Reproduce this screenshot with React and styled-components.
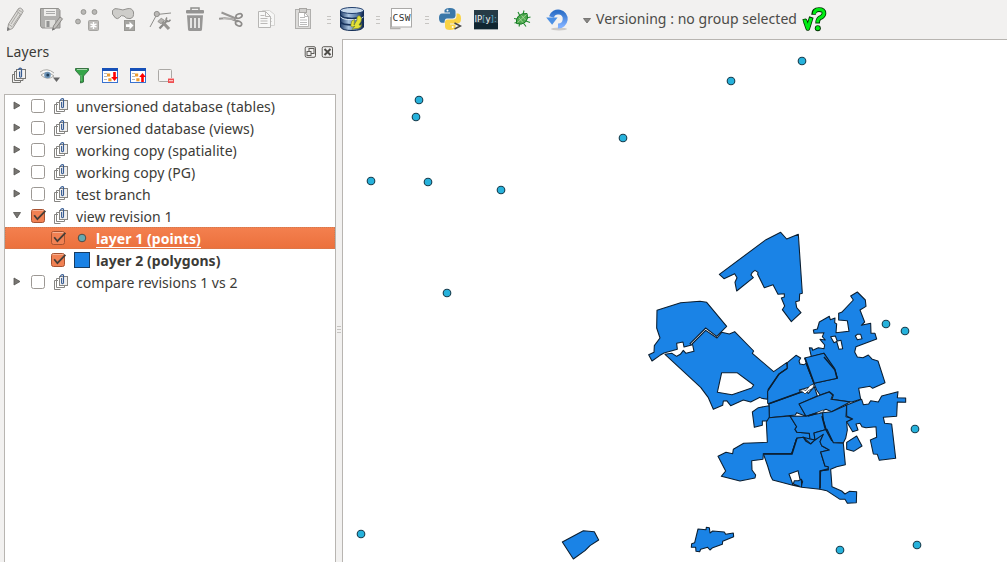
import React from 'react';
import styled, { createGlobalStyle, css } from 'styled-components';

const GlobalStyle = createGlobalStyle`
  * { box-sizing: border-box; }
  html, body { margin: 0; padding: 0; overflow: hidden; }
  body { background: #f2f1f0; font-family: "Noto Sans", "Open Sans", sans-serif; color: #3c3b37; }
  svg { display: block; flex: none; }
`;

const Window = styled.div`
  width: 1007px;
  height: 562px;
  display: flex;
  flex-direction: column;
  background: #f2f1f0;
`;
const Toolbar = styled.header`
  height: 39px;
  flex: none;
  display: flex;
  align-items: center;
`;
const ToolIcon = styled.svg`
  margin-left: ${(p) => p.$gap}px;
`;
const VersionLabel = styled.span`
  margin-left: 5px;
  width: 202px;
  padding-bottom: 1px;
  font-size: 14px;
  letter-spacing: 0.04px;
  line-height: 20px;
  white-space: nowrap;
  color: #4c4b48;
`;
const Body = styled.main`
  flex: 1;
  min-height: 0;
  display: flex;
`;
const Dock = styled.aside`
  width: 336px;
  flex: none;
  padding-left: 4px;
  display: flex;
  flex-direction: column;
`;
const DockTitle = styled.div`
  height: 25px;
  padding: 0 3px 0 2px;
  display: flex;
  align-items: center;
  font-size: 14px;
  letter-spacing: 0.1px;
`;
const DockButtons = styled.div`
  display: flex;
  gap: 5px;
  margin-left: auto;
`;
const DockTools = styled.div`
  height: 30px;
  flex: none;
  display: flex;
`;
const Tree = styled.div`
  flex: 1;
  border: 1px solid #b8b5b1;
  border-bottom: 0;
  background: #fff;
`;
const Row = styled.div`
  height: 22px;
  padding-left: ${(p) => (p.$child ? 45 : 8)}px;
  display: flex;
  align-items: center;
  font-size: 14px;
  line-height: 22px;
  white-space: nowrap;
  font-weight: ${(p) => (p.$child ? 700 : 400)};
  ${(p) => p.$selected && css`
    color: #fff;
    background: linear-gradient(#f4804f, #eb703c);
    outline: 1px dotted #cf7a51;
    outline-offset: -1px;
  `}
`;
const Name = styled.span`
  margin-top: 2px;
  margin-left: ${(p) => (p.$child ? 6 : 7)}px;
  letter-spacing: ${(p) => (p.$child ? 0.06 : 0.04)}px;
  line-height: 16px;
  border-bottom: 1px solid ${(p) => (p.$line ? '#fff' : 'transparent')};
`;
const Expander = styled.svg`
  margin-right: 9px;
`;
const Symbol = styled.svg`
  margin-left: 7px;
`;
const GroupHolder = styled.span`
  margin-left: 7px;
`;
const Splitter = styled.div`
  width: 6px;
  flex: none;
  display: flex;
  flex-direction: column;
  align-items: center;
  gap: 2px;
  padding-top: 287px;
`;
const Notch = styled.i`
  width: 4px;
  height: 1px;
  background: #c5c3c0;
`;
const MapCanvas = styled.section`
  flex: 1;
  border-left: 1px solid #b8b5b1;
  border-top: 1px solid #b8b5b1;
  background: #fff;
`;

/* Every toolbar drawing uses window coordinates, from x across w pixels. */
function Tool({ x, w, gap, children }) {
  return <ToolIcon $gap={gap} width={w} height="39" viewBox={`${x} 0 ${w} 39`}>{children}</ToolIcon>;
}
function Grip({ x, gap }) {
  return <Tool x={x} w={4} gap={gap}><path d={`M${x} 16.5h4M${x} 19.5h4M${x} 23.5h4`} stroke="#c7c5c2" /></Tool>;
}

function MainToolbar() {
  return (
    <Toolbar>
      <Tool x={6} w={18} gap={6}>
        <path d="M7.5 30.5L8.5 24 18.5 8.5Q20 7 22.5 9.5Q24 11 22 13.5L12.5 28.5Z" fill="#dddcd9" stroke="#9b9996" />
        <path d="M9 24.5l3.5 2.5M18 9.5l4.5 3M17 11.5l4 3M11 24L19 11.5M13 25.5L20.5 14" stroke="#aaa8a4" fill="none" />
        <path d="M7 31l.5-4 2.5 2z" fill="#777" />
      </Tool>
      <Tool x={40} w={24} gap={16}>
        <path d="M40.5 8.5h18l1.5 2v17.5H42l-1.5-2z" fill="#b1b0ae" stroke="#93928f" />
        <rect x="44" y="9" width="12" height="7" fill="#eeedeb" /><path d="M46 11.5h9M46 13.5h9" stroke="#aaa" />
        <rect x="45" y="20" width="10" height="7.5" fill="#dfdedb" /><rect x="46.5" y="21" width="3" height="6" fill="#929292" />
        <path d="M52.5 30l1-4 6.5-9 2.5 1.8-6.5 9z" fill="#c3c1be" stroke="#8b8985" /><path d="M52 30.5l3-1-2-1.8z" fill="#777" />
      </Tool>
      <Tool x={74} w={26} gap={10}>
        {[[83.5, 12], [94.5, 12], [78, 21.5]].map(([x, y]) => <circle key={x} cx={x} cy={y} r="2.4" fill="#b9b8b5" stroke="#979692" />)}
        <rect x="88.5" y="20.5" width="10" height="10" rx="1" fill="#bdbbb8" stroke="#a5a4a1" />
        <path d="M93.5 22v7M90.5 23.8l6 3.4M96.5 23.8l-6 3.4" stroke="#fff" strokeWidth="1.5" />
      </Tool>
      <Tool x={111} w={25} gap={11}>
        <path d="M115.5 18Q111 14 112.5 10.5Q114.5 7.5 118.5 9Q123 11 127 8.8Q132 7.5 133.5 12Q134.2 18 130 18.6Q126 19 124 16Q121 14.5 119.5 17.5Q117.5 19.5 115.5 18Z" fill="#cecdca" stroke="#92918e" />
        <rect x="124.5" y="20.5" width="10" height="10" fill="#a6a5a2" stroke="#989793" />
        <path d="M126 24.2h3.5v-2.4l4 3.8-4 3.8v-2.4H126z" fill="#fff" />
      </Tool>
      <Tool x={149} w={22} gap={13}>
        <path d="M150 27L156.8 14.5L171 13" fill="none" stroke="#8e8d8a" /><circle cx="156.8" cy="14" r="2.6" fill="#bbb9b6" stroke="#8e8d8a" />
        <path d="M159.5 28.5l8-8.5" stroke="#8b8a87" strokeWidth="2.2" /><path d="M162 21.5l7 7.5" stroke="#969491" strokeWidth="3.2" />
        <path d="M157.8 21.5l3.4-3.2 3.4 2.2-3.6 3.2z" fill="#b5b3b0" stroke="#8b8a87" strokeWidth=".8" />
        <path d="M167 17.5q-2 2.5 0 3.8q2.2.8 3.5-1.6" fill="none" stroke="#8b8a87" strokeWidth="1.5" />
      </Tool>
      <Tool x={186} w={18} gap={15}>
        <path d="M191 10V8h8v2" fill="none" stroke="#8f8e8c" strokeWidth="1.5" />
        <rect x="186" y="10" width="18" height="3.6" rx="1" fill="#949392" />
        <path d="M187 15.2h16l-1 14.3q0 1.5-2 1.5h-10q-2 0-2-1.5z" fill="#989796" />
        <path d="M191 18v10M195 18v10M199 18v10" stroke="#f2f1f0" strokeWidth="1.7" />
      </Tool>
      <Tool x={219} w={24} gap={15}>
        <path d="M219 18.8Q229 17 238 21.5M221.5 12.5Q230 16 236 18.5" fill="none" stroke="#989694" strokeWidth="2" />
        <ellipse cx="239" cy="16" rx="3.2" ry="2.1" transform="rotate(-20 239 16)" fill="none" stroke="#8e8c8a" strokeWidth="1.7" />
        <ellipse cx="238.6" cy="23.5" rx="3.2" ry="2.3" transform="rotate(28 238.6 23.5)" fill="none" stroke="#8e8c8a" strokeWidth="1.7" />
        <path d="M223 18.6L234 19.2" stroke="#d1cfcd" strokeWidth=".8" />
      </Tool>
      <Tool x={258} w={18} gap={15}>
        <path d="M262.5 10.5h7l5 4v11h-12z" fill="#f7f7f6" stroke="#d5d4d2" /><path d="M265 18.5h7M265 21.5h7" stroke="#d8d7d5" />
        <path d="M258.5 11.5h7l5 5v11h-12z" fill="#f8f8f7" stroke="#b7b6b4" /><path d="M265.5 11.5v5h5M260.5 15.5h4M260.5 18.5h7M260.5 21h7M260.5 23.5h7" fill="none" stroke="#bbb9b7" />
      </Tool>
      <Tool x={294} w={18} gap={18}>
        <rect x="295.5" y="9.5" width="15" height="19" fill="#dddcda" stroke="#b0afad" />
        <path d="M298.5 12.5h6l4 4v10h-10z" fill="#fff" stroke="#b8b7b5" /><path d="M300 17.5h5M300 20h7M300 22.5h7M300 24.5h7M304.5 12.5v4h4" fill="none" stroke="#bbb" />
        <rect x="299.5" y="8.5" width="7" height="4" fill="#d0cfcd" stroke="#a7a5a2" />
      </Tool>
      <Grip x={327} gap={15} />
      <Tool x={340} w={25} gap={9}>
        <defs><linearGradient id="database" x1="0" x2="1"><stop stopColor="#213f6b" /><stop offset=".35" stopColor="#a8c3df" /><stop offset=".7" stopColor="#5a7ca7" /><stop offset="1" stopColor="#10264c" /></linearGradient></defs>
        <path d="M340.5 10v17Q342 30.5 352 30.5Q362 30.5 363.5 27V10" fill="url(#database)" stroke="#102b54" />
        <ellipse cx="352" cy="10.5" rx="11.5" ry="3" fill="#c6d8ea" stroke="#213f6d" />
        <path d="M340.5 15.5Q342 18.5 352 18.5T363.5 15.5M340.5 22Q342 25 352 25T363.5 22" fill="none" stroke="#17335d" strokeWidth="1.7" />
        <path d="M340.5 16.7Q342 19.7 352 19.7T363.5 16.7" fill="none" stroke="#dce8f2" />
        <path d="M359 15.5Q362.5 17 361 21.5L359 25Q362 26 361.5 23.5Q362 29 354.5 28.7L352 29.5L355 26Q350 28.5 351 24Q351 20 354.5 19.5L354 25L357 20Q356 17 359 15.5Z" fill="#e4e238" stroke="#6d7b28" strokeWidth=".6" />
      </Tool>
      <Grip x={376} gap={11} />
      <Tool x={390} w={23} gap={10}>
        <path d="M390.5 17v11.5h10" fill="none" stroke="#b2b0ad" strokeWidth="1.4" />
        <rect x="391.5" y="8.5" width="20" height="18.5" fill="#fff" stroke="#aaa9a7" />
        <text x="392.6" y="21" fontFamily="DejaVu Sans Mono" fontSize="9.5" textLength="17.8" fill="#333">CSW</text>
      </Tool>
      <Grip x={425} gap={12} />
      <Tool x={439} w={23} gap={10}>
        <path d="M444.5 13V10Q446 7.8 450 8Q455.5 8 455.5 11.5V16Q455 18.5 452.5 18.5H447Q444.5 18.5 444.5 22.8H441.5Q439 22 439 18Q439 13.5 442 13.5H450V12.5H444.5Z" fill="#3b78a9" />
        <path d="M456.5 13.5H458Q461 14 461 18.5Q461 23 458 23.5H450V24.5H455.5V27.5Q454 30 450 30Q445 30 445 26.5V22.5Q445 19.5 448 19.5H453.5Q456.5 19 456.5 16Z" fill="#f9d345" />
        <circle cx="447.5" cy="10.5" r="1" fill="#fff" /><circle cx="452.7" cy="27" r="1" fill="#fff" />
        <path d="M454.5 23l6 3-6 3" fill="none" stroke="#444" strokeWidth="1.4" />
      </Tool>
      <Tool x={474} w={24} gap={12}>
        <rect x="474" y="10" width="24" height="19.5" fill="#263b46" /><rect x="474" y="23" width="24" height="6" fill="#102631" /><path d="M474 29.5h24" stroke="#a0a8ab" />
        <text x="474.6" y="22" fontFamily="DejaVu Sans" fontSize="8.5" fill="#f5f7f7">IP<tspan fill="#58a8cb">[</tspan>y<tspan fill="#58a8cb">]:</tspan></text>
      </Tool>
      <Tool x={514} w={17} gap={16}>
        <path d="M518 12l2 4M524 10.5l-1 4M530.5 17l-4 1M530 22.5l-4-1.5M526 26.5l-3-4M519 26.5l1-4M514 18.5l5 1M514.5 23l4-1" stroke="#238c2e" strokeWidth="1.1" />
        <path d="M516.5 23.5Q515.5 19 518.5 16Q521.5 13 527 13.5Q528.8 18.5 525.5 22Q521.5 25.5 516.5 23.5Z" fill="#4da94e" stroke="#167b23" />
        <path d="M517.5 22.5L526.5 14.5M519 18l4 4.5M521.5 15.5l4 4.5" stroke="#b2d9a1" strokeWidth=".8" />
      </Tool>
      <Tool x={546} w={23} gap={15}>
        <defs><linearGradient id="reload" x1="0" y1="0" x2="0" y2="1"><stop stopColor="#2e70c9" /><stop offset="1" stopColor="#7eafff" /></linearGradient></defs>
        <ellipse cx="559" cy="29" rx="8" ry="1.5" fill="#cbc9c7" />
        <path d="M551.5 17A7 7 0 1 1 558 26" fill="none" stroke="url(#reload)" strokeWidth="5" />
        <path d="M546.2 17.5h11.4l-5.5 7.2z" fill="#4c90e4" />
      </Tool>
      <Tool x={583} w={8} gap={14}><path d="M583.5 18.5h7l-3.5 4.5z" fill="#888784" stroke="#666562" strokeWidth=".8" /></Tool>
      <VersionLabel>Versioning : no group selected</VersionLabel>
      <Tool x={802} w={27} gap={3}>
        <g fill="none" strokeLinejoin="round" stroke="#003400" strokeWidth="4.6">
          <path d="M804 21.5l2.2-.6 2.6 7.6 3.6-11.5" /><path d="M814.5 14.8Q814.5 9.6 820 9.6Q825.3 9.6 825 13.5Q824.5 16.3 821 17.8Q818.6 19.2 818.6 23.4" />
        </g>
        <circle cx="818.8" cy="28.2" r="3" fill="#003400" />
        <g fill="none" strokeLinejoin="round" stroke="#00ed14" strokeWidth="3">
          <path d="M804.6 21.3l1.6-.4 2.6 7.6 3.3-10.5" /><path d="M815.2 14Q815.5 9.6 820 9.6Q825.3 9.6 825 13.5Q824.5 16.3 821 17.8Q818.6 19.2 818.6 22.6" />
        </g>
        <circle cx="818.8" cy="28.2" r="2.1" fill="#00ed14" />
      </Tool>
    </Toolbar>
  );
}

function GroupIcon() {
  return (
    <svg width="15" height="18" viewBox="0 0 15 18">
      <path d="M.5 7.5V16.5H6.5M4 7.5H.5" fill="none" stroke="#868582" />
      <path d="M2.5 5.5V14.5H10.5V12.5M6 5.5H2.5" fill="none" stroke="#868582" />
      <rect x="5.5" y="3.5" width="8" height="9" fill="#f0efee" stroke="#868582" />
      <path d="M6.6 3.8V3Q7.6.8 9.5 2V10Q8.4 11.6 7.6 10V5" fill="none" stroke="#365b92" strokeWidth="1.1" />
    </svg>
  );
}

function CheckBox({ checked }) {
  return (
    <svg width="17" height="18" viewBox="0 0 17 18">
      <rect x="1.5" y="2.5" width="13" height="13" rx="2" fill={checked ? '#f18153' : '#fff'} stroke={checked ? '#a65231' : '#9c9894'} />
      {checked && <><path d="M2.5 3.5h11" stroke="#f7b091" /><path d="M4.2 8.2l3.2 4L15.4 3.8" fill="none" stroke="#453e39" strokeWidth="1.8" /></>}
    </svg>
  );
}

function DockTool({ x, w, gap, children }) {
  return <ToolIcon $gap={gap} width={w} height="22" viewBox={`${x} 64 ${w} 22`}>{children}</ToolIcon>;
}

function TableIcon({ x, up }) {
  return <>
    <rect x={x + .5} y="68.5" width="15" height="14" fill="#fff" stroke="#3972d0" /><path d={`M${x} 69.5h16`} stroke="#1650b8" strokeWidth="3" />
    <path d={`M${x + 2} 73.5h3M${x + 2} 76.5h3M${x + 2} 79.5h3`} stroke="#b5b5b5" />
    <path d={`M${x + 5} 75h3.2M${x + 6.3} 79.8h3.2`} stroke="#ec9b31" strokeWidth="3" />
    <path d={up ? `M${x + 12.5} 82v-6` : `M${x + 12.5} 72v6`} stroke="#f00" strokeWidth="2.6" />
    <path d={up ? `M${x + 9.2} 77l3.3-4 3.3 4z` : `M${x + 9.2} 77l3.3 4 3.3-4z`} fill="#f00" />
  </>;
}

const groups = [
  { name: 'unversioned database (tables)' },
  { name: 'versioned database (views)' },
  { name: 'working copy (spatialite)' },
  { name: 'working copy (PG)' },
  { name: 'test branch' },
  { name: 'view revision 1', open: true, checked: true },
  { name: 'layer 1 (points)', kind: 'point', checked: true, selected: true },
  { name: 'layer 2 (polygons)', kind: 'polygon', checked: true },
  { name: 'compare revisions 1 vs 2' },
];

function LayerRow({ item }) {
  const child = Boolean(item.kind);
  return (
    <Row $child={child} $selected={item.selected}>
      {!child && <Expander width="8" height="12" viewBox="0 0 8 12"><path d={item.open ? 'M.5 2.5h7L4 8z' : 'M1 2l6 3.5L1 9z'} fill="#777571" stroke="#565450" strokeWidth=".8" /></Expander>}
      <CheckBox checked={item.checked} />
      {!child && <GroupHolder><GroupIcon /></GroupHolder>}
      {child && <Symbol width="16" height="16" viewBox="0 0 16 16">
        {item.kind === 'point' ? <circle cx="8" cy="8" r="3.8" fill="#66a9b1" stroke="#494c48" /> : <rect x=".5" y=".5" width="15" height="15" fill="#1a82e5" stroke="#173c62" />}
      </Symbol>}
      <Name $child={child} $line={item.selected}>{item.name}</Name>
    </Row>
  );
}

function LayersPanel() {
  return (
    <Dock>
      <DockTitle>
        Layers
        <DockButtons>
          <svg width="12" height="12" viewBox="-.5 0 12 12"><g fill="none" stroke="#5e5c58"><rect x=".7" y=".7" width="10.3" height="10.6" rx="1.5" /><rect x="4.5" y="2.5" width="5" height="5" /><rect x="2.5" y="5.5" width="4" height="4" fill="#f2f1f0" /></g></svg>
          <svg width="12" height="12" viewBox="-.5 0 12 12"><rect x=".7" y=".7" width="10.3" height="10.6" rx="1.5" fill="none" stroke="#5e5c58" /><path d="M3 3l6 6M9 3L3 9" stroke="#4e4c48" strokeWidth="2" /></svg>
        </DockButtons>
      </DockTitle>
      <DockTools>
        <DockTool x={12} w={15} gap={8}><g transform="translate(12 67)"><path d="M.5 7.5V15.5H8.5V13.5M2.5 4.5V13.5H11V11.5" fill="none" stroke="#777673" /><path d="M2.5 7.5H.5M4.5 4.5h-2" stroke="#777673" /><rect x="4.5" y="2.5" width="9" height="9" fill="none" stroke="#777673" /><path d="M6.6 3V2.4Q8 .2 9.5 1.8V9.5Q8.4 11 7.6 9.5V4.5" fill="none" stroke="#365b92" strokeWidth="1.2" /></g></DockTool>
        <DockTool x={40} w={21} gap={13}>
          <path d="M40 72Q47 67 54 73M41 75Q47 70 54 76Q47 81 41 75" fill="#f9faf9" stroke="#aaa9a5" /><circle cx="47.5" cy="75" r="3.3" fill="#6e94b7" /><circle cx="47.8" cy="75" r="1.5" fill="#203d57" /><path d="M53 77.5h7L56.5 82z" fill="#666" />
        </DockTool>
        <DockTool x={75} w={15} gap={14}><path d="M75.5 68.5h13v2l-5 5.5v6l-3 1v-7l-5-5.5z" fill="#35a548" stroke="#397444" /><path d="M77 69.5h10" stroke="#a7d5ab" /><path d="M81 75v6" stroke="#72c77b" /></DockTool>
        <DockTool x={102} w={16} gap={12}><TableIcon x={102} /></DockTool>
        <DockTool x={130} w={16} gap={12}><TableIcon x={130} up /></DockTool>
        <DockTool x={158} w={17} gap={12}><rect x="158.5" y="69.5" width="13" height="12" rx="1" fill="#f4f3f2" stroke="#aaa8a5" /><path d="M168 80.5h6" stroke="#fff" strokeWidth="5" /><rect x="168" y="78.5" width="6" height="4.5" fill="#ee5053" /><path d="M169 80.7h4" stroke="#ffdada" /></DockTool>
      </DockTools>
      <Tree>{groups.map((item) => <LayerRow key={item.name} item={item} />)}</Tree>
    </Dock>
  );
}

const points = [[802, 61], [731, 81], [419, 100], [416, 117], [623, 138], [371, 181], [428, 182], [501, 190], [447, 293], [886, 324], [905, 331], [915, 429], [361, 534], [840, 550], [917, 545]];

/* Map tiles hold their parcel outlines at three units to a pixel. */
const tiles = [
  { at: [640, 225], shapes: [
    'M238 148L378 44 422 22 440 42 475 28 487 205 479 207 478 227 467 230 470 248 483 263 454 290 427 254 434 243 424 219 433 216 433 206 414 208 399 179 373 188 353 148 354 142 345 136 337 142 333 150 340 158 290 198 285 172 291 158 284 146 252 161Z',
    'M51 256L122 233 180 229 200 232 260 304 230 334 197 309 150 356 155 360 132 366 129 351 110 355 112 373 72 384 60 391 36 408 26 389 42 382 43 362 60 339 50 309Z',
    'M75 388L96 385 110 394 121 388 130 376 138 385 162 379 158 360 156 357 197 316 231 339 245 322 268 327 284 320 341 378 337 385 401 440 440 413 442 430 420 445 384 498 382 523 365 520 360 517 332 531 310 525 272 542 260 527 250 528 248 541 220 553 205 518 182 487ZM245 443L232 502 276 509 335 489 341 480 291 443Z',
  ] },
  { at: [740, 280], shapes: [
    'M83 370V334L116 283 142 265V248L168 226 182 234 177 243 180 252 192 254 198 250 222 310 207 322 178 330 182 338 90 372Z',
    'M252 220L214 230 208 203 216 204 218 211 235 203 252 206 254 195 240 178 256 180 247 170 252 158 222 160 220 150 232 147 238 126 268 109 271 119 285 114 284 128 290 132 288 158 327 154 322 122 296 120 296 100 305 97 340 60 332 48 352 36 376 60 378 79 360 90 374 126 364 136 392 130 393 160 405 160 410 177 348 200 344 216 352 231 369 233 385 225 397 238 414 243 435 308 398 325 390 319 356 325 362 358 335 366 276 358 280 345 268 335 240 345 230 330 222 310 292 295 284 270ZM346 168L352 179 366 176 362 163 352 163ZM290 184L297 208 308 206 303 181ZM272 170L282 188 292 184 286 168Z',
    'M194 234L252 220 284 266 292 295 222 310 205 268Z',
  ] },
  { at: [700, 340], shapes: [
    'M207 191L303 157 312 153 325 160 343 140 352 168 298 192 318 229 290 218 286 225 207 233Z',
    'M297 192L354 168 388 156 398 165 393 178 450 186 395 215 378 208 368 212 318 229Z',
    'M157 216L175 203 207 197 208 236 202 243 187 243 187 256 163 262Z',
    'M207 233L270 228 290 260 285 268 291 277 328 280 330 297 340 300 342 280 370 283 340 310 310 292 290 295 275 341 190 341 189 358 155 362 156 390 167 405 165 414 120 423 64 409 77 393 54 349 78 337 98 341 100 328 131 310 202 307 199 246Z',
    'M270 228L318 229 368 218 370 240 381 268 342 279 345 300 330 297 328 280 291 277 285 268 290 260Z',
    'M310 292L330 297 345 300 370 283 332 312Z',
    'M190 341L275 341 290 295 310 292 318 304 332 312 362 283 370 283 360 305 365 317 388 330 362 336 375 378 385 380 385 390 362 392V430L360 448 305 442V435L308 425 304 418 295 422 283 422 280 432 298 439 278 436 278 432 267 402 294 392 300 418 304 418 305 442 278 436 218 420 212 408 203 378Z',
    'M368 218L395 215 440 195 438 230 458 236 440 246 442 270 437 295 430 308 400 308 385 290 370 240Z',
    'M362 336L388 330 365 317 360 305 370 283 345 300 342 279 381 268 400 308 430 310 436 374 410 380 392 388 396 440 425 453 435 462 448 454 470 455 469 488 442 490 435 478 420 478 380 452 360 448 362 392 385 390 385 380 375 378Z',
  ] },
  { at: [740, 380], shapes: [
    'M320 75L365 58 370 74 386 72 392 62 415 66 425 48 474 35 472 53 497 54 497 67 472 66 470 109 430 112 434 130 455 132 467 235 418 241 412 223 400 222 391 180 410 172 408 140 378 143 366 140 360 130 348 132 354 150 338 155 320 125 338 117 320 108Z',
    'M320 187L350 168 366 198 341 214 320 208Z',
  ] },
  { at: [550, 510], shapes: ['M37 96L100 62 133 65 146 90 120 107 105 122 70 147Z', 'M444 57L468 59 469 52 478 53 480 69 488 63 523 66 527 73 550 69 551 80 518 94 517 103 488 113 480 120 473 112 452 118 449 125 438 124 437 112 424 112 425 101 434 98Z'] },
];
/* Narrow roads between neighbouring parcels. */
const roads = [
  'M768 404L804 391M768 390L779 374 787 368.5M805 358L814 383',
  'M808 416L822 411.5M824 357L835 370 837 378M822 416L825 428 832 441',
  'M764 454H792L797 438M820 488V471L828 469',
];

function ParcelMap() {
  return (
    <svg width="664" height="522" viewBox="343 40 664 522">
      {tiles.map((tile) => (
        <g key={tile.at.join()} transform={`translate(${tile.at.join(' ')}) scale(.333333)`} fill="#1a83e6" stroke="#0b1e30" strokeWidth="3.2" strokeLinejoin="round">
          {tile.shapes.map((d) => <path key={d} d={d} fillRule="evenodd" />)}
        </g>
      ))}
      <g fill="none" stroke="#0b1e30" strokeWidth="1.5">{roads.map((d) => <path key={d} d={d} />)}</g>
      <path d="M799 391l4-1.5 3 1 4-5 4-1.5-1 4-5 3-3 3-2-2z" fill="#fff" stroke="#0b1e30" strokeWidth=".7" />
      <path d="M816 413l7-3 1 1.5-6 2z" fill="#fff" stroke="#0b1e30" strokeWidth=".6" />
      {points.map(([x, y]) => <circle key={`${x}-${y}`} cx={x} cy={y} r="3.8" fill="#26b2dc" stroke="#173c4c" strokeWidth="1.1" />)}
    </svg>
  );
}

export default function App() {
  return (
    <Window>
      <GlobalStyle />
      <MainToolbar />
      <Body>
        <LayersPanel />
        <Splitter><Notch /><Notch /><Notch /></Splitter>
        <MapCanvas><ParcelMap /></MapCanvas>
      </Body>
    </Window>
  );
}
